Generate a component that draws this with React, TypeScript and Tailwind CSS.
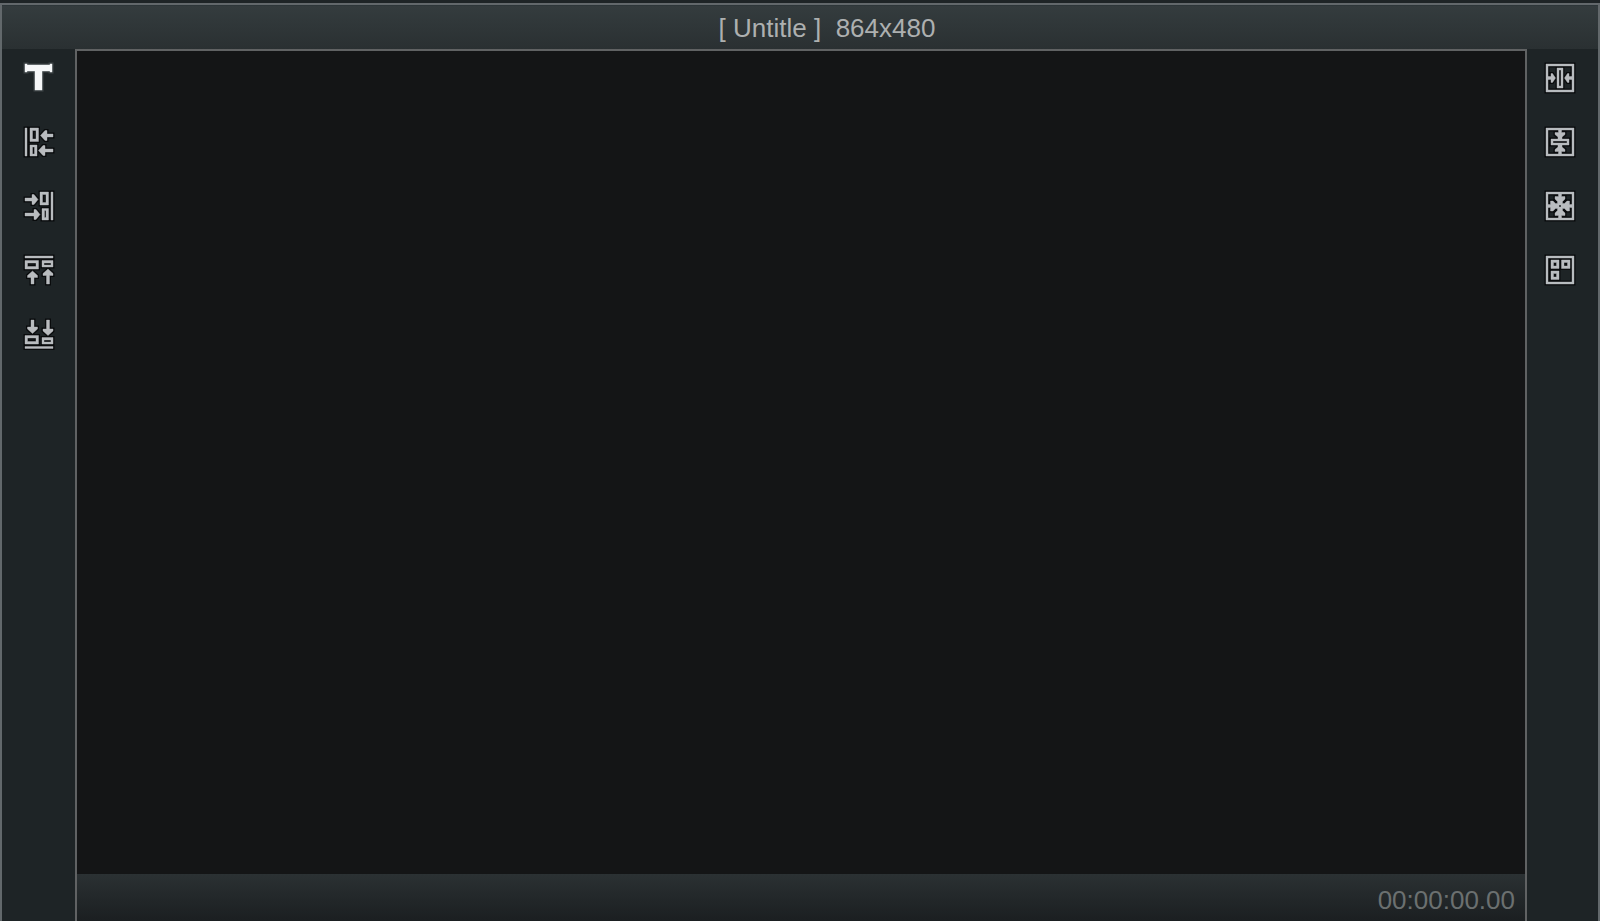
interface Tool {
  label: string;
  d: string;
  bright?: boolean;
}

const FRAME = "M0 0H28V28H0ZM2 2V26H26V2Z";

const leftTools: Tool[] = [
  {
    label: "Add text",
    bright: true,
    d: "M0 0H2V1H25V0H27V8H25V7H17V26H10V7H2V8H0Z",
  },
  {
    label: "Align left",
    d: "M0 0H2V28H0ZM5 0H13.5V13.5H5ZM7.5 2.5V11H11V2.5ZM5 17H12V28H5ZM7.5 19V26H9.5V19ZM15.5 7.5L20 2.5H22V6H28V9H22V12.5H20ZM13.5 22.5L18 17.5H20V21H28V24H20V27.5H18Z",
  },
  {
    label: "Align right",
    d: "M26 0H28V28H26ZM15 0H23.5V13H15ZM17.5 2.5V10.5H21V2.5ZM17 16.5H23.5V28H17ZM19.5 18.5V25.5H21V18.5ZM13 7.5L9 2.5H7V6H0V9H7V12.5H9ZM15 22.5L11 17.5H9V21H0V24H9V27.5H11Z",
  },
  {
    label: "Align top",
    d: "M0 0H28V2H0ZM0 4.5H13.5V13H0ZM2.5 7V10.5H11V7ZM17 4.5H28V11H17ZM19 7V9H26V7ZM7.5 15L2.5 19.5V21.5H6V28H9V21.5H12.5V19.5ZM23 13L18 17.5V19.5H21.5V28H24.5V19.5H28V17.5Z",
  },
  {
    label: "Align bottom",
    d: "M0 26.5H28V28.5H0ZM0 15.5H13.5V24H0ZM2.5 18V21.5H11V18ZM17 17.5H28V24H17ZM19 20V22H26V20ZM7.5 13.5L12.5 9V7H9V0H6V7H2.5V9ZM23 15.5L28 11V9H24.5V0H21.5V9H18V11Z",
  },
];

const rightTools: Tool[] = [
  {
    label: "Center horizontally",
    d: `${FRAME}M11 4H17V24H11ZM13 6V22H15V6ZM9.5 14L6.5 9.5H5V12.5H2V15.5H5V18.5H6.5ZM18.5 14L21.5 9.5H23V12.5H26V15.5H23V18.5H21.5Z`,
  },
  {
    label: "Center vertically",
    d: `${FRAME}M5 11H23V17H5ZM7 13V15H21V13ZM12.5 2H15.5V4.5H19V6.5L16 9V11H12V9L9 6.5V4.5H12.5ZM12.5 26H15.5V23.5H19V21.5L16 19V17H12V19L9 21.5V23.5H12.5Z`,
  },
  {
    label: "Center on canvas",
    d: `${FRAME}M12.5 2H15.5V4.5H19V7L16.5 9.5V11.5H18.5L21 9H23.5V12.5H26V15.5H23.5V19H21L18.5 16.5H16.5V18.5L19 21V23.5H15.5V26H12.5V23.5H9V21L11.5 18.5V16.5H9.5L7 19H4.5V15.5H2V12.5H4.5V9H7L9.5 11.5H11.5V9.5L9 7V4.5H12.5ZM13 13V15H15V13Z`,
  },
  {
    label: "Arrange",
    d: `${FRAME}M5 4H13V12.5H5ZM7.5 6.5V10H10.5V6.5ZM15.5 4H24V12.5H15.5ZM18 6.5V10H21.5V6.5ZM5 15H13V23.5H5ZM7.5 17.5V21H10.5V17.5Z`,
  },
];

function ToolButton({ label, d, bright }: Tool) {
  const color = bright ? "#f6f7f8" : "#b9bcbf";

  return (
    <button type="button" aria-label={label} className="block">
      <svg
        width="29"
        height="29"
        viewBox="0 0 29 29"
        className="block overflow-visible"
        aria-hidden="true"
      >
        {/* dark halo under the glyph */}
        <path
          d={d}
          fill="none"
          stroke={bright ? "#3f4547" : "#090b0c"}
          strokeWidth="3"
        />
        <path
          d={d}
          fill={color}
          fillRule="evenodd"
          stroke={color}
          strokeWidth="0.4"
        />
      </svg>
    </button>
  );
}

function ToolList({ tools }: { tools: Tool[] }) {
  return tools.map((tool) => <ToolButton key={tool.label} {...tool} />);
}

export default function App() {
  return (
    <div className="flex min-h-screen flex-col bg-[#1e2426] pt-[3px] font-['Liberation_Sans',Arial,sans-serif]">
      <div className="flex flex-1 flex-col border-x-2 border-t-2 border-[#62686b]">
        <header className="flex h-11 shrink-0 items-center justify-center border-t border-[#2d3639] bg-linear-to-b from-[#343c3e] to-[#2a3032] pl-[54px]">
          <h1 className="text-[26px] leading-[30px] whitespace-pre text-[#adb0b0]">
            {"[ Untitle ]  864x480"}
          </h1>
        </header>

        <div className="flex flex-1">
          <nav
            aria-label="Alignment"
            className="flex w-[73px] shrink-0 flex-col items-start gap-[35px] pt-[15px] pl-[23px]"
          >
            <ToolList tools={leftTools} />
          </nav>

          <main className="flex min-w-0 flex-1 flex-col border-x-2 border-t-2 border-[#606263]">
            <div className="flex-1 bg-[#141516]" />
            <footer className="flex h-[47px] shrink-0 items-center justify-end bg-linear-to-b from-[#2b3133] to-[#1b1f21] pt-1 pr-2.5">
              <time className="text-[26px] leading-[30px] text-[#6b7070]">
                00:00:00.00
              </time>
            </footer>
          </main>

          <nav
            aria-label="Centering"
            className="flex w-[71px] shrink-0 flex-col items-start gap-[35px] pt-[15px] pl-[19px]"
          >
            <ToolList tools={rightTools} />
          </nav>
        </div>
      </div>
    </div>
  );
}
